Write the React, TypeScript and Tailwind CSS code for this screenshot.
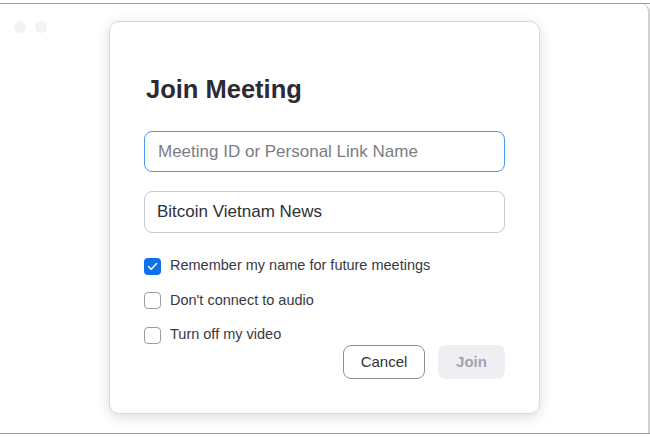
import React, { useState } from 'react';

const font = { fontFamily: '"Liberation Sans", Arial, sans-serif' };

function Checkbox({ checked, label, onToggle }: { checked: boolean; label: string; onToggle: () => void }) {
  return (
    <label className="flex items-center h-[20px] gap-[9px] cursor-pointer" onClick={onToggle}>
      {checked ? (
        <span className="w-[17px] h-[17px] rounded-[4px] bg-[#0e71eb] flex items-center justify-center">
          <svg width="11" height="9" viewBox="0 0 11 9" fill="none">
            <path d="M1.5 4.6 L4.2 7.2 L9.6 1.6" stroke="white" strokeWidth="1.4" strokeLinecap="round" strokeLinejoin="round" />
          </svg>
        </span>
      ) : (
        <span className="w-[17px] h-[17px] rounded-[4px] border border-[#9b9ba4] bg-white" />
      )}
      <span className="text-[14.5px] text-[#393943]">{label}</span>
    </label>
  );
}

export default function App() {
  const [remember, setRemember] = useState(true);
  const [noAudio, setNoAudio] = useState(false);
  const [noVideo, setNoVideo] = useState(false);
  const [name, setName] = useState('Bitcoin Vietnam News');

  return (
    <div className="w-[650px] h-[437px] bg-white flex flex-col" style={font}>
      <div className="h-[3px]" />
      <div className="h-[1px] bg-[#c98f47]" />
      <main className="relative flex-1 flex justify-center pt-[17px] pl-[1px] border-r-2 border-[#d0d0d0] rounded-tr-[8px]">
        <div className="absolute left-[14px] top-[17px] flex gap-[9px]">
          <span className="w-[12px] h-[12px] rounded-full bg-[#f3f3f3]" />
          <span className="w-[12px] h-[12px] rounded-full bg-[#f3f3f3]" />
        </div>

        <div className="w-[431px] h-[393px] bg-white border border-[#d9d9d9] rounded-[10px] shadow-[0_3px_14px_rgba(0,0,0,0.14)] px-[34px] pt-[52px] flex flex-col">
          <h1 className="text-[25.5px] leading-[30px] font-bold text-[#2b2b36] pl-[2px]">Join Meeting</h1>

          <input
            className="mt-[27px] h-[41px] w-full rounded-[8px] border border-[#4a98f4] px-[13px] text-[17px] text-[#333] placeholder:text-[#7c7c86] outline-none"
            placeholder="Meeting ID or Personal Link Name"
          />
          <input
            className="mt-[19px] h-[42px] w-full rounded-[8px] border border-[#c8c8d2] px-[12px] text-[17px] text-[#2f2f36] outline-none"
            value={name}
            onChange={(e) => setName(e.target.value)}
          />

          <div className="mt-[23px] flex flex-col gap-[14.5px]">
            <Checkbox checked={remember} label="Remember my name for future meetings" onToggle={() => setRemember(!remember)} />
            <Checkbox checked={noAudio} label="Don't connect to audio" onToggle={() => setNoAudio(!noAudio)} />
            <Checkbox checked={noVideo} label="Turn off my video" onToggle={() => setNoVideo(!noVideo)} />
          </div>

          <div className="flex justify-end gap-[13px]">
            <button className="w-[82px] h-[34px] rounded-[8px] border border-[#8f8f95] bg-white text-[15px] text-[#303038]">
              Cancel
            </button>
            <button className="w-[67px] h-[34px] rounded-[8px] bg-[#eeeef3] text-[15px] font-bold text-[#a3a3ab]">
              Join
            </button>
          </div>
        </div>
      </main>
      <div className="h-[1px] bg-[#c98f47]" />
      <div className="h-[3px]" />
    </div>
  );
}
